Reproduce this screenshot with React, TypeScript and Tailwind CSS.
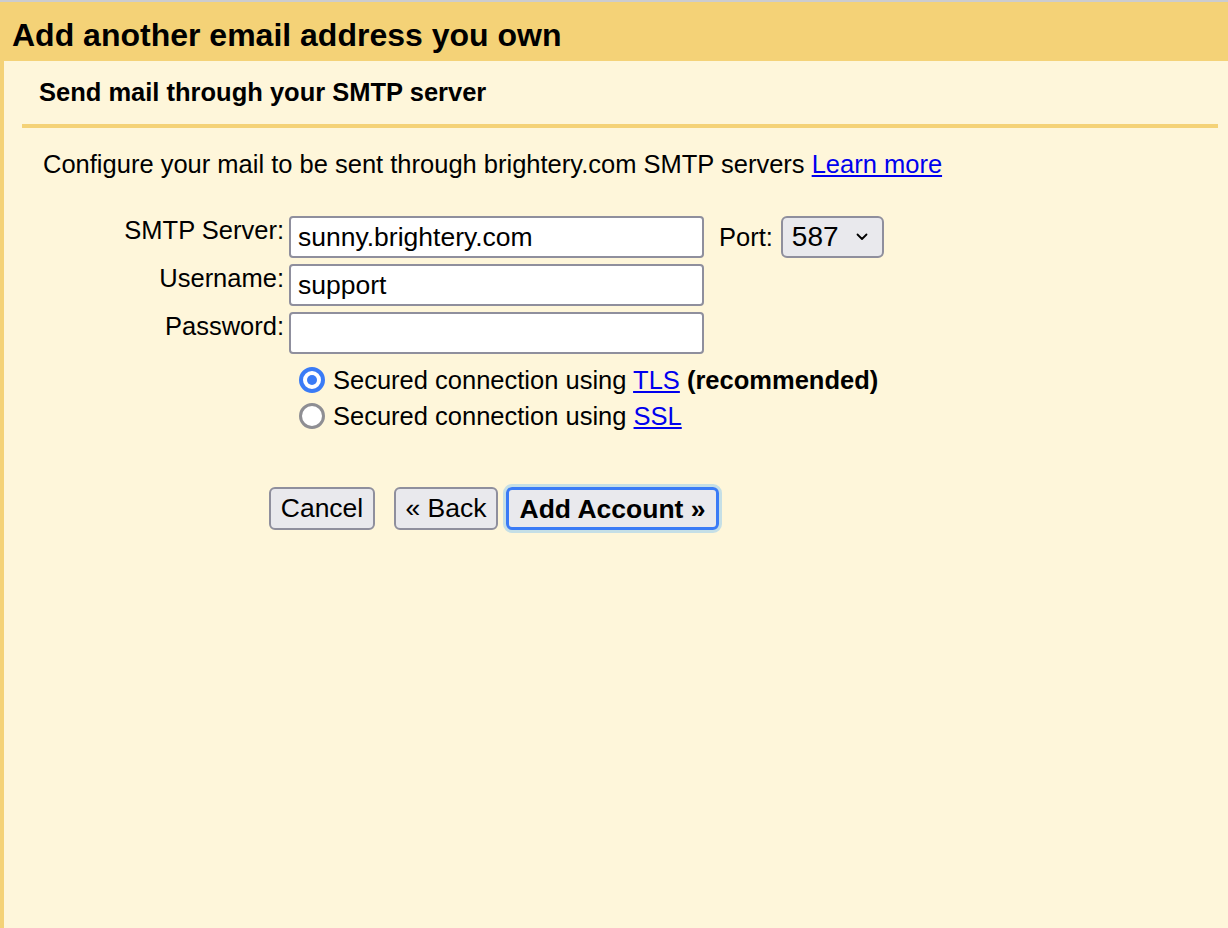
import React from "react";

const F = { fontFamily: '"Liberation Sans", Arial, sans-serif' };

function Radio({ checked }: { checked: boolean }) {
  return checked ? (
    <span className="flex h-[26px] w-[26px] shrink-0 items-center justify-center rounded-full border-[4px] border-[#3a7bf6] bg-white">
      <span className="h-[10px] w-[10px] rounded-full bg-[#3a7bf6]" />
    </span>
  ) : (
    <span className="h-[26px] w-[26px] shrink-0 rounded-full border-[3px] border-[#8e8e93] bg-white" />
  );
}

const inputCls =
  "h-[42px] w-[415px] rounded-[4px] border-2 border-[#8f8f9d] bg-white px-[7px] text-[26.5px] outline-none";

export default function App() {
  return (
    <div className="h-[928px] w-[1228px] overflow-hidden bg-[#fef6da] text-black" style={F}>
      <div className="h-[2px] bg-[#cbccd0]" />
      <div className="flex h-[59px] items-center bg-[#f4d277] pl-[12px] pt-[6px]">
        <h1 className="text-[32px] font-bold leading-none">Add another email address you own</h1>
      </div>
      <div className="flex h-[867px]">
        <div className="w-[4px] bg-[#f4d277]" />
        <div className="flex-1">
          <div className="flex h-[63px] items-center pl-[35px]">
            <h2 className="text-[25.5px] font-bold leading-none">Send mail through your SMTP server</h2>
          </div>
          <div className="ml-[18px] mr-[10px] h-[4px] bg-[#f4d277]" />
          <p className="mt-[22px] pl-[39px] text-[25.5px] leading-[28px]">
            Configure your mail to be sent through brightery.com SMTP servers{" "}
            <a href="#" className="text-[#0000ee] underline">Learn more</a>
          </p>
          <div className="mt-[38px] grid grid-cols-[280px_auto] gap-x-[5px] gap-y-[6px]">
            <label className="text-right text-[25.5px] leading-[28px]">SMTP Server:</label>
            <div className="flex items-center">
              <input defaultValue="sunny.brightery.com" className={inputCls} style={F} />
              <span className="ml-[15px] text-[25.5px]">Port:</span>
              <div className="ml-[8px] flex h-[42px] w-[103px] items-center rounded-[6px] border-2 border-[#8f8f9d] bg-[#e9e9ed] pl-[9px] pr-[14px]">
                <span className="flex-1 text-[28px] leading-none">587</span>
                <svg width="12" height="8" viewBox="0 0 12 8" fill="none">
                  <path d="M1.5 1.5 6 6l4.5-4.5" stroke="#000" strokeWidth="1.8" strokeLinecap="round" strokeLinejoin="round" />
                </svg>
              </div>
            </div>
            <label className="text-right text-[25.5px] leading-[28px]">Username:</label>
            <input defaultValue="support" className={inputCls} style={F} />
            <label className="text-right text-[25.5px] leading-[28px]">Password:</label>
            <input type="password" className={inputCls} style={F} />
          </div>
          <div className="ml-[295px] mt-[12px] flex flex-col gap-[8px] text-[25.5px] leading-[28px]">
            <div className="flex items-center gap-[8px]">
              <Radio checked />
              <span>
                Secured connection using <a href="#" className="text-[#0000ee] underline">TLS</a>{" "}
                <b>(recommended)</b>
              </span>
            </div>
            <div className="flex items-center gap-[8px]">
              <Radio checked={false} />
              <span>
                Secured connection using <a href="#" className="text-[#0000ee] underline">SSL</a>
              </span>
            </div>
          </div>
          <div className="ml-[265px] mt-[54px] flex items-center">
            <button className="h-[43px] w-[106px] rounded-[6px] border-2 border-[#8f8f9d] bg-[#e9e9ed] text-[26.5px]" style={F}>
              Cancel
            </button>
            <button className="ml-[19px] h-[43px] w-[104px] rounded-[6px] border-2 border-[#8f8f9d] bg-[#e9e9ed] text-[26.5px]" style={F}>
              « Back
            </button>
            <div className="ml-[5px] rounded-[9px] border-[3px] border-[#c5dfe6]">
              <button className="h-[43px] w-[213px] rounded-[6px] border-[3px] border-[#3a7bf6] bg-[#e9e9ed] text-[26.5px] font-bold" style={F}>
                Add Account »
              </button>
            </div>
          </div>
        </div>
      </div>
    </div>
  );
}
